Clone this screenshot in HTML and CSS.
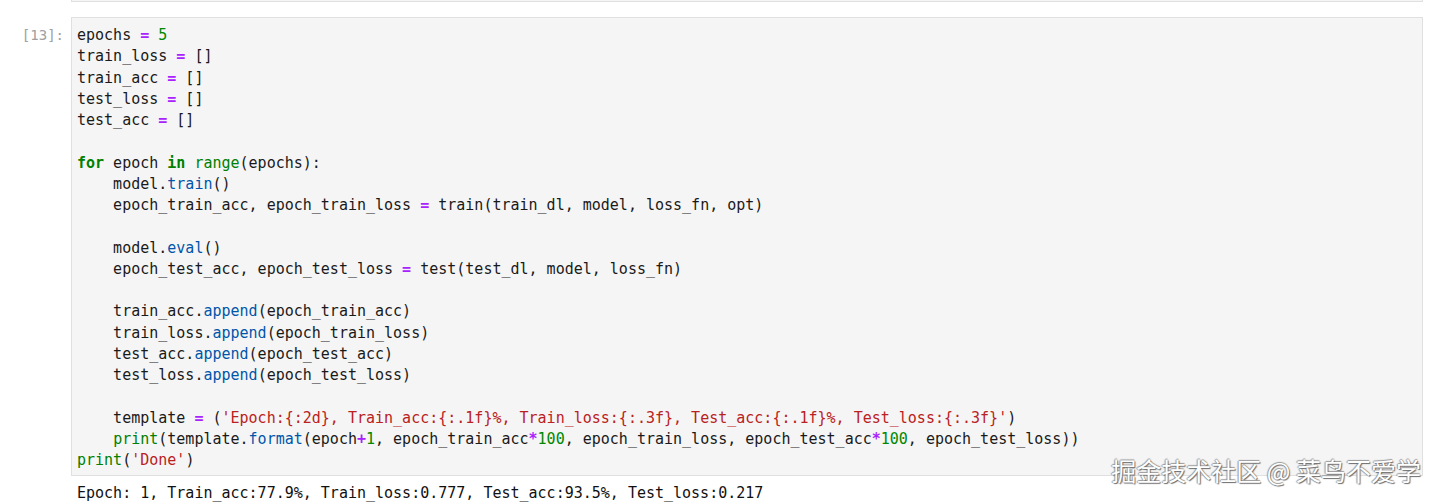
FILE: index.html
```html
<!DOCTYPE html>
<html>
<head>
<meta charset="utf-8">
<link rel="stylesheet" href="styles.css">
</head>
<body>
<div class="notebook">
  <div class="cell prev">
    <div class="prompt"></div>
    <div class="input prev-input"></div>
  </div>
  <div class="cell">
    <div class="prompt">[13]:</div>
    <div class="input">
<pre class="code">epochs <span class="op">=</span> <span class="num">5</span>
train_loss <span class="op">=</span> []
train_acc <span class="op">=</span> []
test_loss <span class="op">=</span> []
test_acc <span class="op">=</span> []

<span class="kw">for</span> epoch <span class="kw">in</span> <span class="bi">range</span>(epochs):
    model.<span class="prop">train</span>()
    epoch_train_acc, epoch_train_loss <span class="op">=</span> train(train_dl, model, loss_fn, opt)

    model.<span class="prop">eval</span>()
    epoch_test_acc, epoch_test_loss <span class="op">=</span> test(test_dl, model, loss_fn)

    train_acc.<span class="prop">append</span>(epoch_train_acc)
    train_loss.<span class="prop">append</span>(epoch_train_loss)
    test_acc.<span class="prop">append</span>(epoch_test_acc)
    test_loss.<span class="prop">append</span>(epoch_test_loss)

    template <span class="op">=</span> (<span class="str">'Epoch:{:2d}, Train_acc:{:.1f}%, Train_loss:{:.3f}, Test_acc:{:.1f}%, Test_loss:{:.3f}'</span>)
    <span class="bi">print</span>(template.<span class="prop">format</span>(epoch<span class="op">+</span><span class="num">1</span>, epoch_train_acc<span class="op">*</span><span class="num">100</span>, epoch_train_loss, epoch_test_acc<span class="op">*</span><span class="num">100</span>, epoch_test_loss))
<span class="bi">print</span>(<span class="str">'Done'</span>)</pre>
    </div>
  </div>
  <div class="cell output">
    <div class="prompt"></div>
    <pre class="out">Epoch: 1, Train_acc:77.9%, Train_loss:0.777, Test_acc:93.5%, Test_loss:0.217</pre>
  </div>
</div>
<div class="watermark">掘金技术社区 @ 菜鸟不爱学</div>
</body>
</html>
```
FILE: styles.css
```css
html, body {
  margin: 0;
  padding: 0;
  background: #ffffff;
  overflow: hidden;
}
body {
  position: relative;
  width: 1437px;
  height: 502px;
}
.notebook {
  display: flex;
  flex-direction: column;
  padding-right: 14px;
}
.cell {
  display: flex;
  align-items: flex-start;
}
.prev {
  margin-top: -19px;
  margin-bottom: 15px;
}
.prev-input {
  height: 21px;
}
.prompt {
  width: 64px;
  flex: 0 0 64px;
  padding-right: 7px;
  text-align: right;
  font-family: "DejaVu Sans Mono", monospace;
  font-size: 14px;
  line-height: 21.25px;
  padding-top: 8px;
  color: #a0a0a0;
  box-sizing: content-box;
}
.input {
  flex: 1;
  background: #f5f5f5;
  border: 1px solid #e0e0e0;
  box-sizing: border-box;
}
.code, .out {
  margin: 0;
  font-family: "DejaVu Sans Mono", "Liberation Mono", monospace;
  font-size: 15px;
  line-height: 21.25px;
  color: #1a1a1a;
  white-space: pre;
}
.code {
  padding: 7px 5px 4px 5px;
}
.output {
  padding-top: 7px;
}
.out {
  padding-left: 6px;
  color: #111;
}
.kw { color: #008000; font-weight: bold; }
.op { color: #aa22ff; font-weight: bold; }
.num { color: #008800; }
.bi { color: #008000; }
.str { color: #ba2121; }
.prop { color: #0055aa; }
.watermark {
  position: absolute;
  right: 16px;
  top: 454px;
  font-family: "Noto Sans CJK SC", sans-serif;
  font-size: 25px;
  line-height: 32px;
  color: #ffffff;
  text-shadow: 1px 1px 1px #6b6b6b, -1px 0 1px #9a9a9a, 0 -1px 1px #9a9a9a;
  white-space: nowrap;
}
```
